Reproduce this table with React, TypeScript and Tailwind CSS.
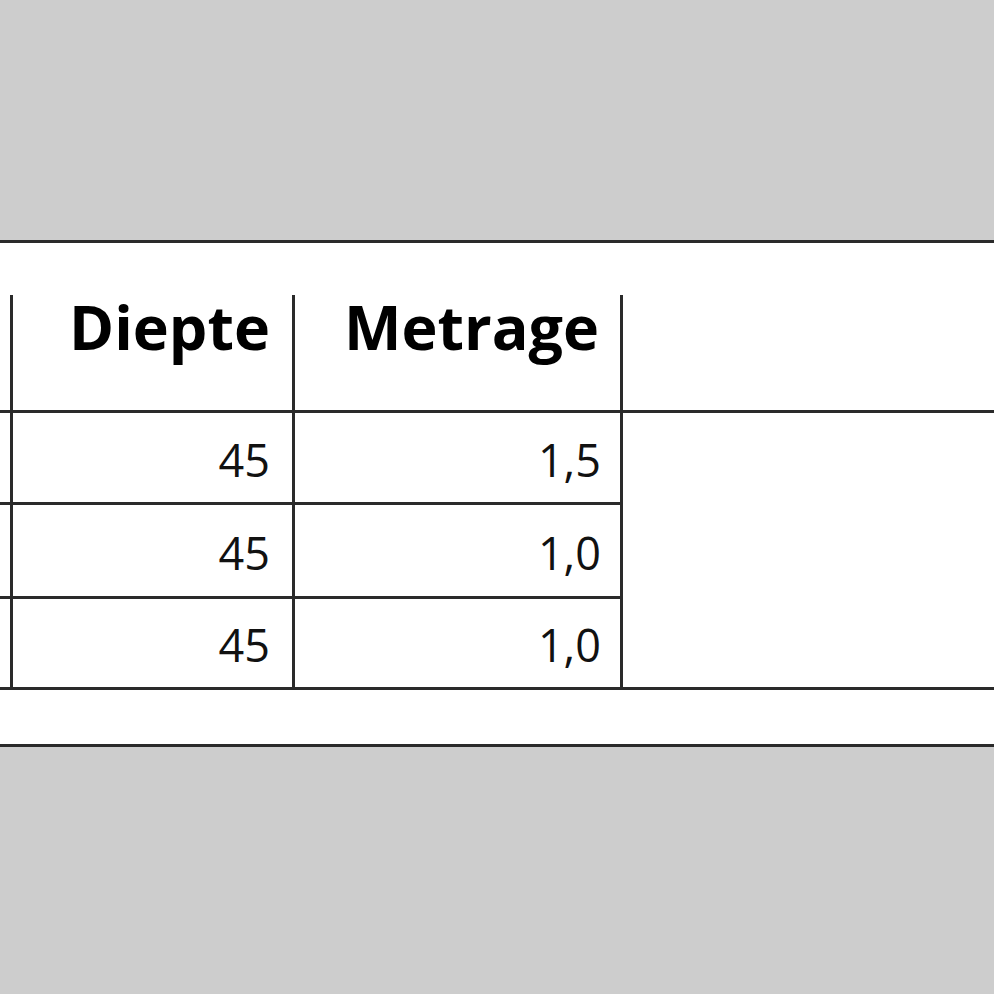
export default function App() {
  const font = { fontFamily: '"Open Sans", "Noto Sans", sans-serif' };
  const rows = [
    { d: "45", m: "1,5", h: "h-[89px]" },
    { d: "45", m: "1,0", h: "h-[91px]" },
    { d: "45", m: "1,0", h: "h-[88px]" },
  ];
  return (
    <div className="w-[994px] h-[994px] bg-[#cdcdcd] overflow-hidden" style={font}>
      <div className="h-[240px]" />
      <div className="bg-white border-y-[3px] border-[#2a2a2a] pt-[52px] h-[507px]">
        {/* header */}
        <div className="flex border-b-[3px] border-[#2a2a2a] h-[118px]">
          <div className="w-[10px]" />
          <div className="w-[282px] border-l-[3px] border-[#2a2a2a] flex justify-end items-start pr-[22px] pt-[1px]">
            <span className="text-[61px] leading-[61px] font-bold text-black">Diepte</span>
          </div>
          <div className="w-[331px] border-x-[3px] border-[#2a2a2a] flex justify-end items-start pr-[21px] pt-[1px]">
            <span className="text-[61px] leading-[61px] font-bold text-black">Metrage</span>
          </div>
          <div className="flex-1" />
        </div>
        {/* body */}
        <div className="flex border-b-[3px] border-[#2a2a2a]">
          <div className="w-[623px] flex flex-col">
            {rows.map((r, i) => (
              <div
                key={i}
                className={`flex ${i < rows.length - 1 ? "border-b-[3px] border-[#2a2a2a]" : ""}`}
              >
                <div className={`w-[10px] ${r.h}`} />
                <div className={`w-[282px] ${r.h} border-l-[3px] border-[#2a2a2a] flex justify-end items-center pr-[22px] pt-[3px]`}>
                  <span className="text-[45px] leading-[45px] text-[#111]">{r.d}</span>
                </div>
                <div className={`w-[331px] ${r.h} border-x-[3px] border-[#2a2a2a] flex justify-end items-center pr-[19px] pt-[3px]`}>
                  <span className="text-[45px] leading-[45px] text-[#111]">{r.m}</span>
                </div>
              </div>
            ))}
          </div>
          <div className="flex-1" />
        </div>
      </div>
    </div>
  );
}
